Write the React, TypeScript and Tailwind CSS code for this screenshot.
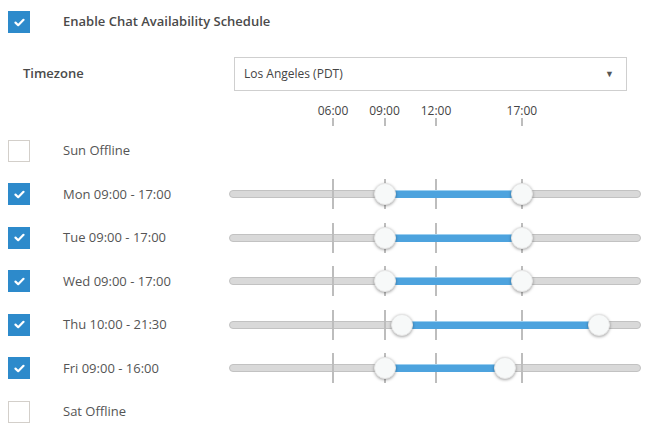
import React from "react";

const WIDTH = 412;
const pct = (h: number) => (h / 24) * WIDTH;
const TICKS = [6, 9, 12, 17];

type Day = { name: string; on: boolean; from?: number; to?: number; label: string };
const DAYS: Day[] = [
  { name: "Sun", on: false, label: "Sun Offline" },
  { name: "Mon", on: true, from: 9, to: 17, label: "Mon 09:00 - 17:00" },
  { name: "Tue", on: true, from: 9, to: 17, label: "Tue 09:00 - 17:00" },
  { name: "Wed", on: true, from: 9, to: 17, label: "Wed 09:00 - 17:00" },
  { name: "Thu", on: true, from: 10, to: 21.5, label: "Thu 10:00 - 21:30" },
  { name: "Fri", on: true, from: 9, to: 16, label: "Fri 09:00 - 16:00" },
  { name: "Sat", on: false, label: "Sat Offline" },
];

function Check({ on }: { on: boolean }) {
  return on ? (
    <div className="w-[22px] h-[22px] bg-[#2d8acb] flex items-center justify-center shrink-0">
      <svg width="11" height="9" viewBox="0 0 11 9">
        <path d="M1.5 4.6 L4.2 7.2 L9.5 1.8" stroke="white" strokeWidth="2.2" fill="none" strokeLinecap="round" strokeLinejoin="round" />
      </svg>
    </div>
  ) : (
    <div className="w-[22px] h-[22px] bg-white border border-[#d3cfca] shrink-0" />
  );
}

function Slider({ from, to }: { from: number; to: number }) {
  return (
    <div className="relative w-[412px] h-[30px]">
      <div className="absolute left-0 right-0 top-[11px] h-[8px] rounded-full bg-[#d9d9d9] border border-[#c2c2c2]" />
      {TICKS.map((t) => (
        <div key={t} className="absolute top-0 w-[2px] h-[30px] bg-[#bdbdbd]" style={{ left: pct(t) }} />
      ))}
      <div
        className="absolute top-[11px] h-[8px] bg-[#4da3de] border-t border-[#9ccff0]"
        style={{ left: pct(from), width: pct(to) - pct(from) }}
      />
      {[from, to].map((h, i) => (
        <div
          key={i}
          className="absolute top-[4px] w-[22px] h-[22px] rounded-full bg-[#f7f9f9] border border-[#e6e6e6] shadow-[0_1px_3px_rgba(0,0,0,0.35)]"
          style={{ left: pct(h) - 10 }}
        />
      ))}
    </div>
  );
}

export default function App() {
  return (
    <div className="w-[655px] h-[442px] bg-white text-[#555] overflow-hidden" style={{ fontFamily: '"Open Sans", sans-serif' }}>
      <div className="flex items-center pl-[8px] pt-[11px] h-[33px]">
        <Check on={true} />
        <span className="ml-[33px] text-[13px] font-semibold text-[#4a4a4a]">Enable Chat Availability Schedule</span>
      </div>
      <div className="flex items-center mt-[24px] h-[34px]">
        <span className="ml-[23px] w-[211px] text-[13px] font-semibold text-[#4a4a4a]">Timezone</span>
        <div className="w-[393px] h-[34px] border border-[#cfcfcf] flex items-center justify-between pl-[9px] pr-[12px] text-[12px] text-[#444]">
          <span>Los Angeles (PDT)</span>
          <span className="text-[9px] text-[#555]">▼</span>
        </div>
      </div>
      <div className="relative h-[38px] ml-[229px] w-[412px]">
        {TICKS.map((t) => (
          <div key={t} className="absolute top-0 flex flex-col items-center w-[40px]" style={{ left: pct(t) - 19 }}>
            <span className="text-[12px] leading-[20px] mt-[10px] text-[#444]">{String(t).padStart(2, "0")}:00</span>
            <div className="w-[2px] h-[8px] bg-[#bdbdbd] -mt-[3px]" />
          </div>
        ))}
      </div>
      <div className="flex flex-col">
        {DAYS.map((d) => (
          <div key={d.name} className="flex items-center h-[43.5px]">
            <div className="ml-[8px]">
              <Check on={d.on} />
            </div>
            <span className="ml-[33px] w-[166px] text-[13px]">{d.label}</span>
            {d.on && d.from !== undefined && d.to !== undefined ? <Slider from={d.from} to={d.to} /> : null}
          </div>
        ))}
      </div>
    </div>
  );
}
